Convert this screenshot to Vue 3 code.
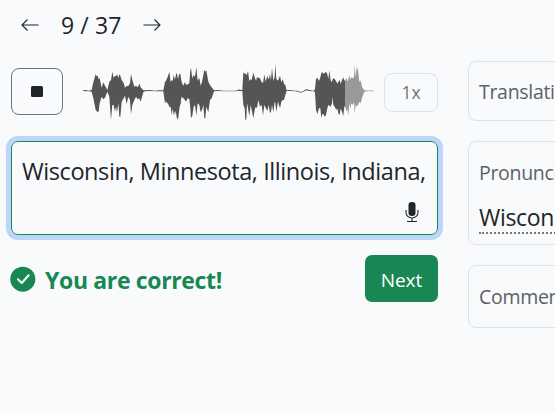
<script setup>
// Each sample is [x, top, bottom] in thirds of a pixel, measured within its segment.
const segments = [
  { x: 75, samples: [[24,106,108],[34,105,109],[40,107,109],[50,105,110],[55,82,130],[62,57,165],[65,64,168],[68,62,172],[71,72,169],[74,70,145],[80,98,125],[85,82,133],[90,92,128],[97,105,110],[103,80,125],[108,75,195],[112,50,150],[116,68,150],[120,62,170],[123,64,155],[126,58,172],[130,68,145],[133,58,185],[136,62,185],[140,75,140],[146,84,130],[150,98,122],[155,93,147],[160,93,125],[165,85,135],[168,56,178],[172,75,150],[178,95,135],[183,92,125],[188,97,133],[193,86,130],[197,97,140],[205,106,112],[210,106,109],[225,105,108],[240,107,109],[250,106,109],[265,106,109],[270,80,145],[275,75,136],[283,50,155],[287,82,155],[290,75,180],[293,78,160],[296,60,182],[300,75,150],[305,53,187],[309,72,195],[314,57,155],[319,78,140]] },
  { x: 155, samples: [[25,105,110],[32,80,130],[36,70,148],[39,65,133],[43,50,158],[47,82,145],[50,82,180],[55,80,150],[60,72,180],[64,55,158],[69,75,195],[72,58,150],[76,57,145],[80,82,125],[85,92,130],[90,80,135],[93,90,140],[98,88,130],[103,85,132],[106,45,160],[108,40,190],[112,70,182],[116,60,155],[120,65,150],[124,36,182],[128,77,145],[133,68,150],[137,92,172],[141,80,165],[145,60,150],[148,44,190],[151,50,190],[154,46,155],[160,80,172],[165,90,135],[170,97,130],[177,106,109],[190,105,108],[205,107,109],[225,107,109],[240,107,109],[250,105,108],[252,103,107],[260,106,109]] },
  { x: 235, samples: [[22,105,108],[25,52,150],[29,56,160],[31,55,195],[34,60,193],[36,58,145],[39,48,160],[43,78,184],[47,73,150],[50,75,165],[55,53,190],[60,70,160],[63,77,156],[66,67,160],[70,68,135],[75,70,155],[80,82,150],[84,84,182],[88,58,150],[92,80,158],[97,62,168],[101,74,150],[105,57,175],[108,76,170],[111,38,150],[115,77,172],[119,65,140],[121,26,145],[124,72,170],[129,77,140],[135,62,160],[139,82,140],[143,73,135],[147,87,135],[151,90,120],[155,106,108],[165,105,108],[180,107,109],[188,107,110],[195,111,113],[204,109,111],[214,102,106],[222,105,108],[237,107,109],[240,102,113],[243,72,165],[247,68,178],[252,78,160],[256,67,160],[259,54,188],[262,52,178],[266,56,178],[269,54,186],[273,50,180],[277,58,160],[280,72,150],[283,46,152],[287,76,155],[291,82,145]] },
  { x: 300, samples: [[97,75,125],[100,70,150],[104,72,155],[109,80,165],[112,86,160],[115,80,175],[119,75,180],[122,87,160],[126,75,170],[130,67,183],[133,78,152],[137,72,160],[140,70,170],[142,80,160],[145,73,182],[148,60,145],[151,74,160],[154,67,145],[159,70,150],[162,65,140],[164,31,177],[167,67,148],[170,37,155],[174,45,150],[178,80,140],[182,77,145],[187,98,125],[193,106,110],[205,107,109],[214,106,108],[221,108,110]] },
]
const samples = segments.flatMap(s =>
  s.samples.map(([x, t, b]) => [s.x - 75 + x / 3, t / 3, b / 3])
)
const wave =
  'M' + samples.map(([x, t]) => `${x.toFixed(2)} ${t.toFixed(2)}`).join('L') +
  'L' + [...samples].reverse().map(([x, , b]) => `${x.toFixed(2)} ${b.toFixed(2)}`).join('L') + 'Z'
</script>

<template>
  <main class="page">
    <section class="exercise">
      <nav class="pager">
        <svg class="arrow" width="18" height="14" viewBox="0 0 18 14"><path d="M17.5 7H1.2M6.5 1.5L1 7 6.5 12.5" /></svg>
        <span class="count">9 / 37</span>
        <svg class="arrow" width="18" height="14" viewBox="0 0 18 14"><path d="M.5 7H16.8M11.5 1.5L17 7 11.5 12.5" /></svg>
      </nav>
      <div class="player">
        <button class="stop" aria-label="Stop"><span></span></button>
        <svg class="wave" width="300" height="75" viewBox="0 0 300 75">
          <defs>
            <linearGradient id="progress" gradientUnits="userSpaceOnUse" x1="0" x2="300" y1="0" y2="0">
              <stop offset=".9" stop-color="#555" />
              <stop offset=".9" stop-color="#999" />
            </linearGradient>
          </defs>
          <path :d="wave" fill="url(#progress)" />
        </svg>
        <button class="speed">1x</button>
      </div>
      <div class="answer">
        <span class="typed">Wisconsin, Minnesota, Illinois, Indiana,</span>
        <svg class="mic" width="14" height="22" viewBox="0 0 14 22">
          <rect x="3.5" y="1" width="7" height="14" rx="3.2" fill="#212529" />
          <path d="M1 9v2.5a6 5.5 0 0 0 12 0V9M7 17v3.3M2 20.5h10" fill="none" stroke="#212529" stroke-width="1.1" />
        </svg>
      </div>
      <div class="result">
        <svg class="check" width="26" height="26" viewBox="0 0 26 26">
          <circle cx="12.8" cy="13.2" r="12.5" fill="#198754" />
          <path d="M8 13.3l3.7 3.7 7-7.7" fill="none" stroke="#f8f9fa" stroke-width="2.1" stroke-linecap="round" stroke-linejoin="round" />
        </svg>
        <strong class="verdict">You are correct!</strong>
        <button class="next">Next</button>
      </div>
    </section>
    <aside class="side">
      <section class="card translation"><span class="label">Translation</span></section>
      <section class="card pronunciation">
        <span class="label">Pronunciation</span>
        <span class="word">Wisconsin</span>
      </section>
      <section class="card comments"><span class="label">Comments</span></section>
    </aside>
  </main>
</template>

<style>
body { background: #f8fafc; }
</style>

<style scoped>
.page {
  box-sizing: border-box;
  width: 555px;
  height: 413px;
  overflow: hidden;
  display: flex;
  gap: 30px;
  padding-left: 11px;
  background: #f8fafc;
  color: #212529;
  font-family: "Open Sans", "Noto Sans", sans-serif;
  white-space: nowrap;
}
button { font-family: inherit; padding: 0; box-sizing: border-box; background: transparent; }
.exercise { width: 427px; flex: none; }
.pager { display: flex; align-items: center; height: 50px; padding-left: 10px; }
.arrow { fill: none; stroke: #212529; stroke-width: 1.1; }
.count { width: 61px; margin: 0 21px 0 22px; font-size: 23px; letter-spacing: .1px; }
.player { display: flex; align-items: center; height: 75px; margin-top: 5px; }
.stop { width: 52px; height: 47px; border: 1px solid #6c757d; border-radius: 8px; display: grid; place-items: center; margin-top: -2px; }
.stop span { width: 12px; height: 11px; border-radius: 1.5px; background: #212529; }
.wave { margin-left: 12px; margin-right: 9px; flex: none; }
.speed { width: 54px; height: 39px; border: 1px solid #dee2e6; border-radius: 8px; color: #70757a; font-size: 17.5px; line-height: 37px; }
.answer {
  box-sizing: border-box;
  height: 94px;
  margin-top: 11px;
  padding: 14px 10px 11px;
  display: flex;
  flex-direction: column;
  justify-content: space-between;
  border: 1px solid #198754;
  border-radius: 7px;
  box-shadow: 0 0 0 5px #bbd6fb;
}
.typed { font-size: 23.5px; line-height: 31px; letter-spacing: -.42px; }
.mic { align-self: flex-end; margin-right: 8px; }
.result { display: flex; align-items: center; height: 47px; margin-top: 20px; }
.check { margin-left: -1px; }
.verdict { margin-left: 9px; padding-top: 3px; color: #198754; font-size: 23px; letter-spacing: -.35px; }
.next { width: 73px; height: 47px; padding-top: 2px; margin-left: auto; border: 0; border-radius: 7px; background: #198754; color: #fff; font-size: 19px; }
.side { width: 300px; flex: none; padding-top: 61px; display: flex; flex-direction: column; gap: 20px; }
.card { box-sizing: border-box; border: 1px solid #dee2e6; border-radius: 8px; padding: 0 10px; display: flex; flex-direction: column; align-items: flex-start; }
.label { color: #5c6166; font-size: 19.5px; line-height: 60px; letter-spacing: -.3px; }
.translation { height: 60px; }
.pronunciation { height: 104px; }
.pronunciation .label { line-height: 62px; height: 60px; }
.comments { height: 63px; }
.comments .label { line-height: 62px; }
.word { font-size: 23px; line-height: 31px; height: 30px; border-bottom: 2px dotted #777; letter-spacing: -.3px; }
</style>
